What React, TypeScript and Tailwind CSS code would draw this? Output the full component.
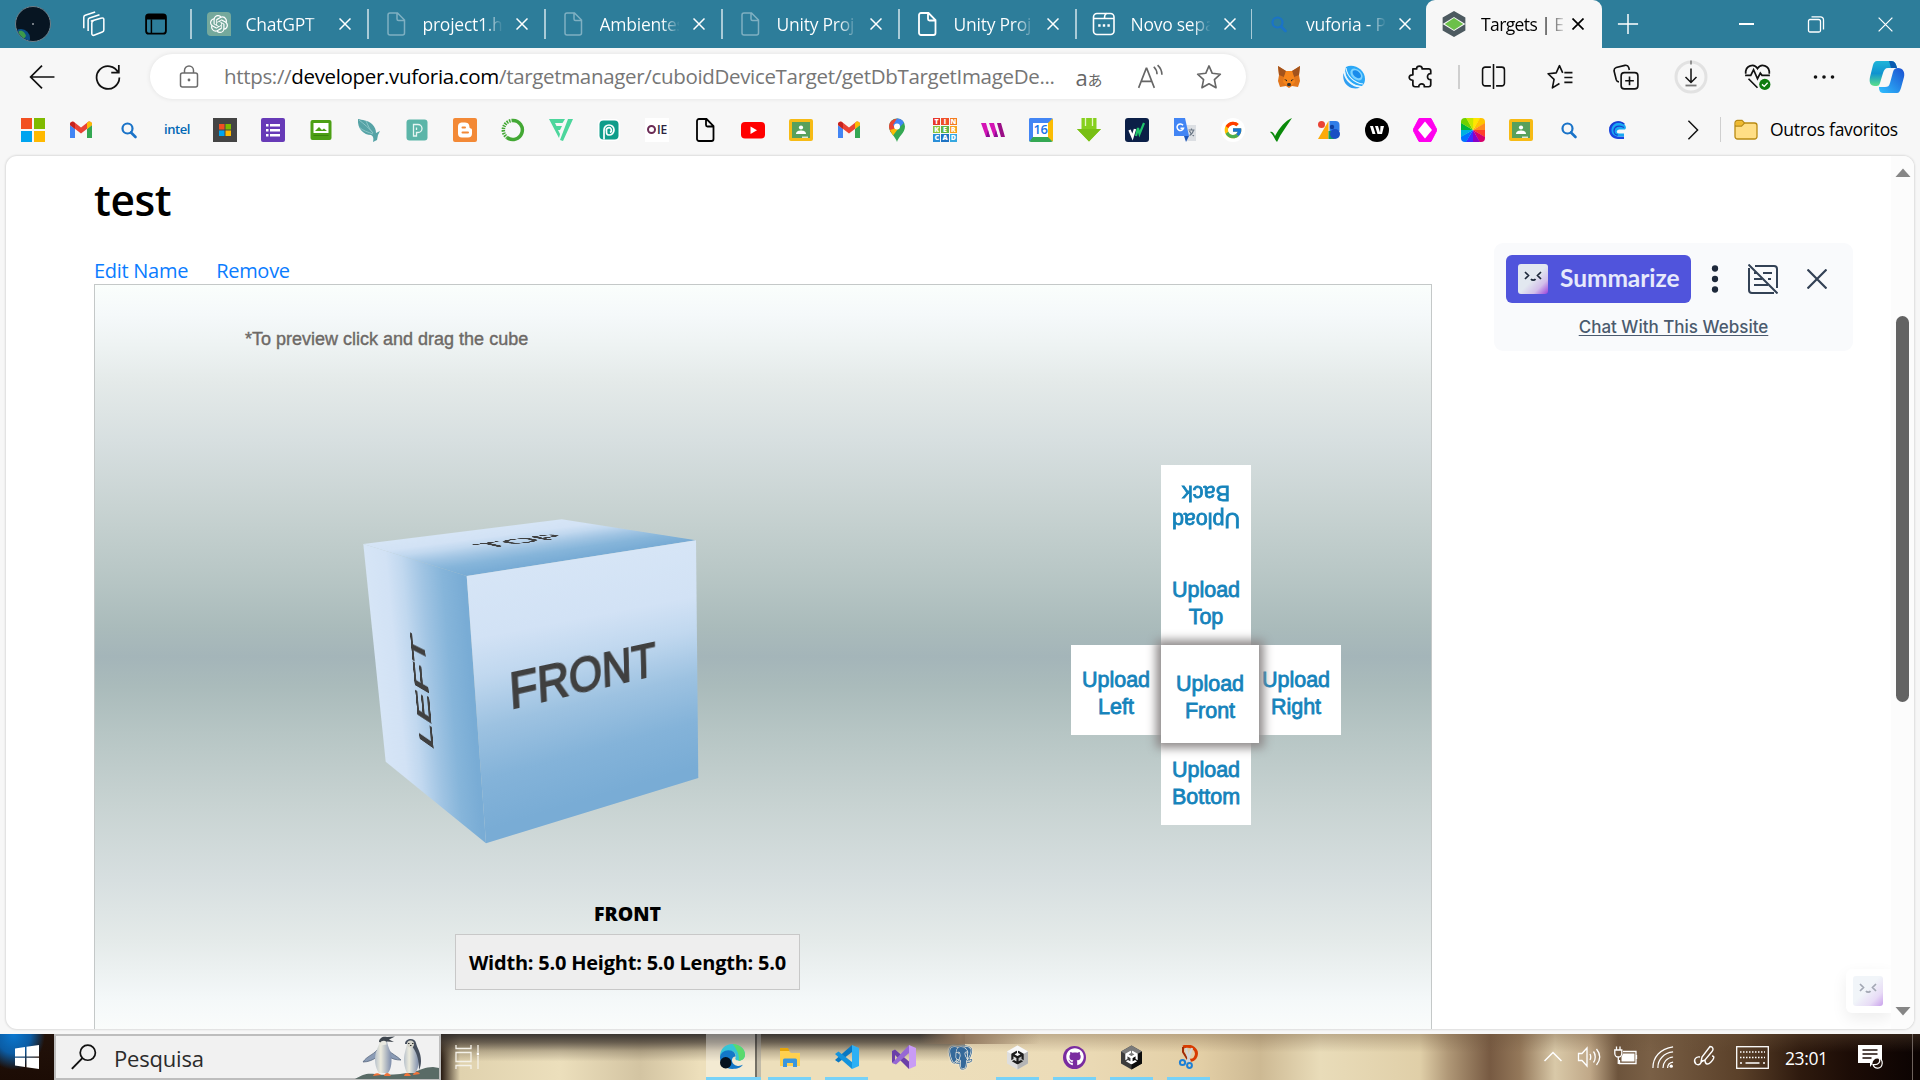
import React from "react";
import { FcGoogle } from "react-icons/fc";
import { SiOpenai, SiUnity } from "react-icons/si";
import { FaGithub } from "react-icons/fa";
import { BiLogoPostgresql } from "react-icons/bi";

type Kids = { children?: React.ReactNode };

/* ---------- shared icon helpers ---------- */

function Svg({ size = 24, box = 24, children, className = "" }: Kids & { size?: number; box?: number; className?: string }) {
  return (
    <svg width={size} height={size} viewBox={`0 0 ${box} ${box}`} fill="none" className={`block shrink-0 ${className}`}>
      {children}
    </svg>
  );
}

function Close({ size = 12, w = 1.5 }: { size?: number; w?: number }) {
  return (
    <Svg size={size} box={12}>
      <path d="M0.5 0.5 11.5 11.5M11.5 0.5 0.5 11.5" stroke="currentColor" strokeWidth={w} />
    </Svg>
  );
}

function PageIcon({ color, w = 1.5 }: { color: string; w?: number }) {
  return (
    <Svg>
      <path d="M4 3a2 2 0 0 1 2-2h7.500l7 7v13a2 2 0 0 1-2 2H6a2 2 0 0 1-2-2z M13 1v6a1.500 1.500 0 0 0 1.500 1.500h6" stroke={color} strokeWidth={w} />
    </Svg>
  );
}

function SearchBlue() {
  return (
    <Svg>
      <circle cx="10.500" cy="10.500" r="5" stroke="#1a73c8" strokeWidth="2.200" />
      <path d="M14 14.500 18.500 19" stroke="#1a73c8" strokeWidth="2.600" strokeLinecap="round" />
    </Svg>
  );
}

/* ---------- tab strip ---------- */

const tabs = [
  { title: "ChatGPT", icon: "gpt" },
  { title: "project1.h", icon: "pageDim" },
  { title: "Ambientes", icon: "pageDim" },
  { title: "Unity Proj", icon: "pageDim" },
  { title: "Unity Proj", icon: "page" },
  { title: "Novo sepa", icon: "new" },
  { title: "vuforia - P", icon: "search" },
];

function TabIcon({ kind }: { kind: string }) {
  if (kind === "gpt")
    return (
      <div className="flex h-6 w-6 items-center justify-center rounded-[4px] rounded-br-none bg-[#75a99c] text-white">
        <SiOpenai size={18} />
      </div>
    );
  if (kind === "pageDim") return <PageIcon color="#7fb0c2" />;
  if (kind === "page") return <PageIcon color="#ffffff" w={1.8} />;
  if (kind === "new")
    return (
      <Svg>
        <rect x="1.500" y="1.500" width="20.500" height="21" rx="3.500" stroke="#fff" strokeWidth="1.600" />
        <path d="M2 6.500h10.500q0-5 2.500-5M12.500 6.500H22" stroke="#fff" strokeWidth="1.600" />
        <path d="M6.200 13.500h2.400M10.800 13.500h2.400M15.400 13.500h2.400" stroke="#fff" strokeWidth="2.600" />
      </Svg>
    );
  return <SearchBlue />;
}

function TabStrip() {
  return (
    <div className="flex h-12 w-full bg-[#2d7d9a] text-white">
      <div className="flex w-[190px] shrink-0 items-center">
        <div className="ml-[15px] flex h-9 w-9 overflow-hidden rounded-full border border-[#70808a] bg-[#071522]">
          <Svg size={34} box={34}>
            <circle cx="5" cy="31" r="9" fill="#0c4f86" />
            <path d="M3 24c4-1 6 2 7 5l-3 4H0z" fill="#3d9a4a" />
            <circle cx="17" cy="17" r="0.800" fill="#fff" />
          </Svg>
        </div>
        <Svg size={26} className="ml-[29px]">
          <g stroke="#fff" strokeWidth="1.400" strokeLinejoin="round">
            <path d="M10.500 9.200 20 6.500a1.500 1.500 0 0 1 2 1.400v9.600a2 2 0 0 1-1.400 1.900l-7.700 3a1.500 1.500 0 0 1-2-1.400V11a2 2 0 0 1 1.300-1.800z" />
            <path d="M7.500 18.500V8.300a2 2 0 0 1 1.300-1.900L18 3.500" />
            <path d="M3.500 16V5.800a2 2 0 0 1 1.300-1.900L14 1" />
          </g>
        </Svg>
        <Svg size={22} className="ml-[39px]">
          <rect x="1.200" y="1.500" width="21.600" height="21" rx="3" stroke="#000" strokeWidth="2" />
          <path d="M1 7V4a3 3 0 0 1 3-3h16a3 3 0 0 1 3 3v3z" fill="#000" />
          <path d="M7 7v15.500" stroke="#000" strokeWidth="1.600" />
        </Svg>
      </div>
      {tabs.map((t, i) => (
        <div key={i} className={`flex shrink-0 items-center ${i < 5 ? "w-[177px]" : "w-[175.500px]"}`}>
          <div className="h-[30px] w-[1.500px] shrink-0 bg-[#a9cbd7]" />
          <div className="ml-[15px] w-6 shrink-0">
            <TabIcon kind={t.icon} />
          </div>
          <div className="ml-[15px] w-[79px] shrink-0 whitespace-nowrap bg-[linear-gradient(90deg,#fff_62px,transparent_80px)] bg-clip-text bg-no-repeat text-[17.500px] tracking-[-0.250px] text-transparent">
            {t.title}
          </div>
          <div className="ml-[14px]">
            <Close />
          </div>
        </div>
      ))}
      <div className="flex h-12 w-[176px] shrink-0 items-center rounded-t-[9px] bg-[#f7f7f7] text-black">
        <Svg size={26} className="ml-[15px]">
          <path d="M12 0 22.500 6v6L12 5.500 1.500 12V6z" fill="#4d5a60" />
          <path d="M1.500 12v6L12 24l10.500-6v-6L12 18.500z" fill="#4d5a60" />
          <path d="M12 6.500 20.500 12 12 17.500 3.500 12z" fill="#6cc04a" />
        </Svg>
        <div className="ml-[14px] w-[82px] whitespace-nowrap bg-[linear-gradient(90deg,#000_62px,transparent_86px)] bg-clip-text text-[17.500px] tracking-[-0.600px] text-transparent">
          Targets | E
        </div>
        <div className="ml-[9px]">
          <Close w={1.7} />
        </div>
      </div>
      <div className="flex items-center">
        <Svg size={22} className="ml-[15px]">
          <path d="M12 1v22M1 12h22" stroke="#fff" strokeWidth="1.600" />
        </Svg>
        <div className="ml-[100px] h-[1.500px] w-[15px] bg-white" />
        <Svg size={18} box={18} className="ml-[53px]">
          <path d="M2.500 4.500h9a2 2 0 0 1 2 2v9a1.500 1.500 0 0 1-1.500 1.500H3A1.500 1.500 0 0 1 1.500 15.500V6a1.500 1.500 0 0 1 1.500-1.500M4.500 1.800h9A3 3 0 0 1 16.500 5v9.500" stroke="#fff" strokeWidth="1.300" />
        </Svg>
        <div className="ml-[53px]">
          <Close size={15} w={1} />
        </div>
      </div>
    </div>
  );
}

/* ---------- address row ---------- */

function Slot({ w, children }: Kids & { w: string }) {
  return <div className={`flex shrink-0 items-center justify-center ${w}`}>{children}</div>;
}

function AddressRow() {
  return (
    <div className="flex h-[57px] w-full items-center text-black">
      <Slot w="w-[84px]">
        <Svg size={26}>
          <path d="M12 1.500 1.500 12 12 22.500M1.500 12H23.500" stroke="#111" strokeWidth="1.600" />
        </Svg>
      </Slot>
      <Slot w="w-[47px]">
        <Svg size={26}>
          <path d="M21.500 8A10.500 10.500 0 1 0 22.500 12.500M22 1v7h-7" stroke="#111" strokeWidth="1.600" />
        </Svg>
      </Slot>
      <div className="ml-[19px] flex h-[45px] w-[1096px] items-center rounded-full bg-white shadow-[0_0_5px_rgba(0,0,0,0.09)]">
        <Svg size={24} className="ml-[27px]">
          <rect x="3.500" y="8" width="17" height="14" rx="2" stroke="#6b6b6b" strokeWidth="1.500" />
          <path d="M7.500 8V5.500a4.500 4.500 0 0 1 9 0V8" stroke="#6b6b6b" strokeWidth="1.500" />
          <circle cx="12" cy="15" r="1.400" fill="#6b6b6b" />
        </Svg>
        <div className="ml-[23px] w-[842px] whitespace-nowrap text-[20.500px] tracking-[-0.330px] text-[#767676]">
          https://<span className="text-black">developer.vuforia.com</span>/targetmanager/cuboidDeviceTarget/getDbTargetImageDe...
        </div>
        <div className="w-[46px] whitespace-nowrap text-center leading-none text-[#666]">
          <span className="text-[22px]">a</span>
          <span className="font-['Noto_Sans_CJK_JP',sans-serif] text-[15px]">あ</span>
        </div>
        <div className="w-[68px] pl-[8px]">
          <Svg size={26} className="mx-auto">
            <path d="M1.500 22 8.500 4h.5L16 22M4 16h9.500M15.500 2.500c2 2 3 4 3 7M19 1c2.600 2.300 4 5.500 4 9" stroke="#666" strokeWidth="1.500" />
          </Svg>
        </div>
        <Slot w="w-[58px]">
          <Svg size={26}>
            <path d="m12 1.800 3 6.800 7.500.800-5.500 5 1.500 7.500-6.500-3.700-6.500 3.700L7 14.400l-5.500-5 7.500-.800z" stroke="#666" strokeWidth="1.500" strokeLinejoin="round" />
          </Svg>
        </Slot>
      </div>
      <Slot w="w-[86px]">
        <Svg>
          <path d="M1 1l8 5h6l8-5-1 9 1 6-2 6-6-1-3 2-3-2-6 1-2-6 1-6z" fill="#e2761b" />
          <path d="M1 1l8 5-2 6-5-2zM23 1l-8 5 2 6 5-2z" fill="#a3531c" />
          <path d="M9 6h6l2 6 1 5-3 3H9l-3-3 1-5z" fill="#f6851b" />
          <path d="M7 14l3 1v1.500zM17 14l-3 1v1.500z" fill="#222" />
          <path d="M10 19l1-1h2l1 1-.5 2h-3z" fill="#333" />
        </Svg>
      </Slot>
      <Slot w="w-[44px]">
        <Svg size={24}>
          <path d="M4 2C12-2 23 5 23 14c0 3-1 5-3 7C11 22 0 12 4 2z" fill="#2ba8f7" />
          <path d="M1.500 8C3 16 10 22 18 22.500c-3 1.500-8 1.500-12-1.500S.5 13 1.500 8z" fill="#2f9ff2" />
          <path d="M2.500 6C3 14 10 21.500 19.500 21.500M4 3c1 8 8 15 17 16" stroke="#e6f6ff" strokeWidth="1.100" />
          <ellipse cx="14.500" cy="9.500" rx="7" ry="4.800" transform="rotate(42 14.500 9.500)" fill="#7ed3ff" />
          <ellipse cx="14.800" cy="9.200" rx="5" ry="3" transform="rotate(42 14.800 9.200)" fill="#1a8ceb" />
        </Svg>
      </Slot>
      <Slot w="w-[90px]">
        <Svg size={26}>
          <path d="M4.500 4.500H8c-.5-3.500 5.500-3.500 5 0h6c1 0 2 1 2 2V9c-4-.5-4 6 0 5.500V19a2 2 0 0 1-2 2h-4c1-3.500-5.500-3.500-5 0H6.500a2 2 0 0 1-2-2v-4C0 15 0 9.500 4.500 10z" stroke="#111" strokeWidth="1.600" strokeLinejoin="round" />
        </Svg>
      </Slot>
      <div className="ml-[-8px] h-[24px] w-[1.500px] bg-[#cfcfcf]" />
      <Slot w="w-[67px]">
        <Svg size={25}>
          <path d="M9.500 3H4a2.500 2.500 0 0 0-2.500 2.500v13A2.500 2.500 0 0 0 4 21h5.500M14.500 3H20a2.500 2.500 0 0 1 2.500 2.500v13A2.500 2.500 0 0 1 20 21h-5.500M12 0v24" stroke="#111" strokeWidth="1.500" />
        </Svg>
      </Slot>
      <Slot w="w-[67px]">
        <Svg size={26}>
          <path d="M16 8h7.500M16 12.500h7.500M16 17h7.500M14.500 8.200 11.500 1.500 8.500 8.200l-7.500.800 5.500 5.200L5 22l6.500-4" stroke="#111" strokeWidth="1.500" strokeLinejoin="round" />
        </Svg>
      </Slot>
      <Slot w="w-[64px]">
        <Svg size={26}>
          <rect x="7.500" y="8" width="15.500" height="15" rx="3" stroke="#111" strokeWidth="1.500" />
          <path d="M15.250 11.500v8M11.250 15.500h8M5.500 16.500A3 3 0 0 1 3 14.500L1 6.500A3 3 0 0 1 3 3.300l8-2a3 3 0 0 1 3.500 2l.6 2.200" stroke="#111" strokeWidth="1.500" />
        </Svg>
      </Slot>
      <Slot w="w-[67px]">
        <Svg size={34} box={34}>
          <circle cx="17" cy="17" r="15" stroke="#e2e2e2" strokeWidth="3" />
          <path d="M17 0.500v4" stroke="#777" strokeWidth="1.500" />
          <path d="M17 8.500v13.500M11.500 17l5.500 5.500 5.500-5.500" stroke="#111" strokeWidth="1.500" />
          <path d="M11.500 25.500h11" stroke="#777" strokeWidth="1.800" />
        </Svg>
      </Slot>
      <Slot w="w-[66px]">
        <Svg size={27}>
          <path d="M1.500 9.500C1 2 9 0 12 5c3-5 11-3 10.500 4.500M1 11h5l2.500-5L12 14l2.500-5 1.500 2h7M4 14l8 8" stroke="#111" strokeWidth="1.500" />
          <circle cx="18.500" cy="19" r="5" fill="#107c10" />
          <path d="m16 19 2 1.800 3-3.300" stroke="#fff" strokeWidth="1.200" />
        </Svg>
      </Slot>
      <Slot w="w-[66px]">
        <Svg size={24}>
          <g fill="#111"><circle cx="3.500" cy="12" r="1.800" /><circle cx="12" cy="12" r="1.800" /><circle cx="20.500" cy="12" r="1.800" /></g>
        </Svg>
      </Slot>
      <Slot w="w-[60px]">
        <Svg size={36} box={36}>
          <defs>
            <linearGradient id="cpA" x1="0" y1="0" x2="0" y2="1"><stop offset="0" stopColor="#1fb5d8" /><stop offset=".5" stopColor="#0f93d0" /><stop offset="1" stopColor="#5be08a" /></linearGradient>
            <linearGradient id="cpB" x1="1" y1="0" x2="0" y2="1"><stop offset="0" stopColor="#1b4fd0" /><stop offset="1" stopColor="#2fc0ff" /></linearGradient>
          </defs>
          <path d="M8 2h14c4 0 5 3 6 7h-9c-3 0-4 2-5 5l-3 10c-1 3-2 3-5 3-5 0-6-4-5-9L4 6c.5-2 2-4 4-4z" fill="url(#cpA)" />
          <path d="M28 34H14c-3 0-4-3-4-6h6c3 0 4-1 5-4l3-11c1-3 2-4 5-4 5 0 7 4 6 9l-3 11c-1 3-2 5-4 5z" fill="url(#cpB)" />
          <path d="M22 2c4 0 5 3 6 7h-6l-2-7z" fill="#0a5bb0" />
        </Svg>
      </Slot>
    </div>
  );
}

/* ---------- favourites bar ---------- */

function Gmail() {
  return (
    <Svg>
      <path d="M1 20V7l5 4v9z" fill="#4285f4" />
      <path d="M18 20v-9l5-4v13z" fill="#34a853" />
      <path d="M1 7V6c0-2 2.500-3 4-2l7 5.500L19 4c1.500-1 4 0 4 2v1l-11 8.500z" fill="#ea4335" />
      <path d="M18 5v6l5-4V6c0-2-2.500-3-4-2z" fill="#fbbc04" />
      <path d="M1 7V6c0-1.500 1.500-2.500 3-2.300L6 5v6z" fill="#c5221f" />
    </Svg>
  );
}

function Classroom() {
  return (
    <Svg>
      <rect y="1" width="24" height="22" rx="2" fill="#f6bb16" />
      <rect x="3" y="4" width="18" height="16" fill="#57a05c" />
      <circle cx="12" cy="9.500" r="2.100" fill="#fff" />
      <path d="M7 16c0-3 3-3.500 5-3.500s5 .5 5 3.500z" fill="#fff" />
      <path d="M13 18.500h6V20h-6z" fill="#d8e7d9" />
    </Svg>
  );
}

const wheel = ["#ffe600", "#ffc400", "#ff8a1f", "#ff3f2a", "#d6006c", "#8b00c8", "#3e2bff", "#0072ff", "#00b1e0", "#00b53c", "#6fd000", "#c8e600"];

const favs: React.ReactNode[] = [
  <Svg><path d="M0 0h11v11H0z" fill="#f25022" /><path d="M13 0h11v11H13z" fill="#7fba00" /><path d="M0 13h11v11H0z" fill="#00a4ef" /><path d="M13 13h11v11H13z" fill="#ffb900" /></Svg>,
  <Gmail />,
  <SearchBlue />,
  <span className="text-[13px] font-semibold tracking-[-0.400px] text-[#0068b5]">intel</span>,
  <Svg><path d="M0 0h24v24H0z" fill="#444" /><path d="M6 6h5.500v5.500H6z" fill="#f25022" /><path d="M12.500 6H18v5.500h-5.500z" fill="#7fba00" /><path d="M6 12.500h5.500V18H6z" fill="#00a4ef" /><path d="M12.500 12.500H18V18h-5.500z" fill="#ffb900" /></Svg>,
  <Svg><rect width="24" height="24" rx="2" fill="#673ab7" /><path d="M5 6h2.500v2.500H5zM9 6h10v2.500H9zM5 11h2.500v2.500H5zM9 11h10v2.500H9zM5 16h2.500v2.500H5zM9 16h10v2.500H9z" fill="#fff" /></Svg>,
  <Svg><rect x="1.500" y="2" width="21" height="20" rx="2" fill="#4c9f14" /><path d="M4.500 5h15v10h-15z" fill="#fff" /><path d="m6 13 4-4 3 3 2-1.500 3 2.500z" fill="#4c9f14" /><path d="M4.500 17h15v1h-15z" fill="#3b830d" /></Svg>,
  <Svg><path d="M1 1c4 1 10 1 14 5 3 3 4 6 4 9l4-2-2 4-1 5-4 2c1-4 0-6-2-7C7 17 0 11 1 1z" fill="#56a3a6" /><path d="M2 2c5 4 10 8 14 13M9 3c2 4 3 8 7 12M2 9c4 4 9 5 14 7" stroke="#8cc5c6" strokeWidth="1" /></Svg>,
  <Svg><rect x="1.500" y="1.500" width="21" height="21" rx="3" fill="#5bb5a8" /><path d="M8.500 18V6.500H13a4 4 0 0 1 0 8h-1.500V18zM11.500 9.500v2.500" stroke="#e5f5f2" strokeWidth="1.300" /></Svg>,
  <Svg><rect width="24" height="24" rx="2" fill="#f38936" /><path d="M8.500 4.500H12c4 0 4.500 3 4.500 5 0 1 2.500.5 2.500 2.500v3.500a4 4 0 0 1-4 4H9a4 4 0 0 1-4-4V8.500a4 4 0 0 1 3.500-4z" fill="#fff" /><path d="M9.500 9.500H12M9.500 14.500H15" stroke="#f38936" strokeWidth="2" strokeLinecap="round" /></Svg>,
  <Svg><path d="M12 2.500a9.500 9.500 0 1 1-6 17" stroke="#43a834" strokeWidth="3.500" /><path d="M12 2.500a9.500 9.500 0 0 0-6 17" stroke="#43a834" strokeWidth="3.500" strokeDasharray="1.500 1" /></Svg>,
  <Svg><path d="M0 1h16l-2.500 4H6l1.500 3H13l-2 4H9l2 4-1 4zM19 1h5L14 23l-3-1z" fill="#4cd69c" /></Svg>,
  <Svg><rect x="1" y="1" width="22" height="22" rx="5" fill="#fff" /><rect x="2.500" y="2.500" width="19" height="19" rx="4" fill="#0f9d8a" /><path d="M7 21.500V12a5 5 0 1 1 5 5M12 17c-2.500 0-2.500-1.500-2.500-4a2.500 2.500 0 1 1 3.500 1.500" stroke="#fff" strokeWidth="1.700" /></Svg>,
  <div className="flex h-6 w-6 items-center justify-center bg-white text-[12px] font-semibold tracking-[-0.300px] text-[#2b2440]"><span className="mr-px h-[9px] w-[9px] rounded-full border-2 border-[#6b2b55]" />IE</div>,
  <PageIcon color="#000" w={1.8} />,
  <Svg><rect y="4" width="24" height="16.500" rx="4" fill="#f00" /><path d="m9.500 8.500 6.500 3.700-6.500 3.800z" fill="#fff" /></Svg>,
  <Classroom />,
  <Gmail />,
  <Svg><path d="M12 24c-1-5-8-9-8-15.500a8 8 0 0 1 16 0C20 15 13 19 12 24z" fill="#34a853" /><path d="M4 8.500a8 8 0 0 1 13-6L6 14.500C5 12.800 4 10.500 4 8.500z" fill="#ea4335" /><path d="m12 .500a8 8 0 0 1 7 4.200L12 12l-4-5z" fill="#4285f4" /><path d="m5 12 9.500-3L8 17.500z" fill="#fbbc04" /><circle cx="12" cy="8.500" r="3" fill="#fff" /></Svg>,
  <div className="grid h-6 w-6 grid-cols-3 grid-rows-3 gap-px text-center text-[7px] font-extrabold leading-[7px] text-white">
    <span className="bg-[#e8372b]">T</span><span className="bg-[#f0502a]">I</span><span className="bg-[#f47b20]">N</span>
    <span className="bg-[#8bc53f]">K</span><span className="bg-[#5fb445]">E</span><span className="bg-[#f9a11b]">R</span>
    <span className="bg-[#2a8fd8]">C</span><span className="bg-[#1f74c4]">A</span><span className="bg-[#36a8e0]">D</span>
  </div>,
  <Svg><path d="M0 5h5l4 14H5zM8 5h5l4 14h-4z" fill="#d414b4" /><path d="M16 5h4l4 14h-4z" fill="#9a0e86" /><path d="m7 12 2 7H5zM15 12l2 7h-4z" fill="#8c0d94" /></Svg>,
  <div className="flex h-6 w-6 flex-col rounded-[2px] border-b-[5px] border-l-[4px] border-r-[5px] border-t-[5px] border-b-[#34a853] border-l-[#4285f4] border-r-[#fbbc04] border-t-[#4285f4] bg-white text-center text-[13px] font-semibold leading-[13px] tracking-[-0.500px] text-[#1a73e8]">16</div>,
  <Svg><path d="M4.500 0h15v11H24L12 23.500 0 11h4.500z" fill="#86cf1e" /><path d="M8.500 0v8M15.500 0v8" stroke="#e6f7c6" strokeWidth="1.300" /><path d="M0 11h24L12 23.500z" fill="#78bf14" /></Svg>,
  <Svg><rect width="24" height="24" rx="3" fill="#0b1f47" /><path d="m4.500 12 3 7 2.500-8" stroke="#fff" strokeWidth="2.400" /><path d="m11 18 2-8 1.500 6 4.500-11" stroke="#20c46b" strokeWidth="2.200" /></Svg>,
  <Svg><path d="M10 7h13v16H14z" fill="#dcdfe3" /><path d="M1 0h11l4 18H1z" fill="#4285f4" /><path d="M11 18h5l-3 6z" fill="#1d56b8" /><path d="M10 7.200a3.300 3.300 0 1 0 .5 3H7.500" stroke="#fff" strokeWidth="1.500" /><path d="M15.500 12h6M18.500 10.500V12M16.500 17.500c2-1 3.500-3 4-5.500M16.500 13c1 2.500 2.500 4 4.500 5" stroke="#6b7785" strokeWidth="1.200" /></Svg>,
  <div className="flex h-6 w-6 items-center justify-center rounded-full bg-white"><FcGoogle size={20} /></div>,
  <Svg><path d="M1 14c2-1 4 1 5 4C11 9 16 3 23 0 18 8 12 15 8 24 6 22 4 16 1 14z" fill="#0a8a0a" /></Svg>,
  <Svg><circle cx="4.500" cy="6.500" r="3.500" fill="#ea4335" /><path d="M1 21 11.500 3v18z" fill="#fbaa0a" /><path d="M12.500 3h6a4 4 0 0 1 4 4v6h-10z" fill="#2f7de8" /><path d="M11.500 13h6v8h-6z" fill="#14a05c" /><circle cx="18" cy="16" r="5" fill="#1a4fc4" /><circle cx="15" cy="9" r="2.200" fill="#0f3f9e" /></Svg>,
  <Svg><circle cx="12" cy="12" r="12" fill="#000" /><path d="M5 8h3l2.500 8h-3zM10 8h3l2.500 8h-3zM15.500 8H19l-2 8h-2z" fill="#fff" /></Svg>,
  <Svg><path d="M6 .500h12L24 12l-6 11.500H6L0 12z" fill="#f0e" strokeLinejoin="round" stroke="#f0e" /><path d="M12 3.500 19 12l-7 8.500L5 12z" fill="#fff" /></Svg>,
  <Svg>
    <defs><clipPath id="wheelClip"><rect width="24" height="24" rx="4" /></clipPath></defs>
    <g clipPath="url(#wheelClip)">
      {wheel.map((c, i) => (
        <path key={c} d="M12 12 12 -8 23 -6z" fill={c} transform={`rotate(${i * 30} 12 12)`} />
      ))}
    </g>
  </Svg>,
  <Classroom />,
  <SearchBlue />,
  <Svg><path d="M20 6C15 1 4 3 4 12c0 5 4 9 9 9h6v-2.500h-5c-3 0-4.500-2-4.500-4" fill="#1b46e0" /><path d="M20 7C14 2 6 6 6.500 13c.5 4 4 5.500 7 5.500H19v-3h-5c-3 0-3-4 0-4h6c1.500-1 1-3 0-4.500z" fill="#19a8f2" /><path d="M19 9.500c-5-3-10-1-10 3.500 0 2.500 2 4 4 4M19 6c-5-4-12-2-14 4" stroke="#173fd0" strokeWidth="1.200" /></Svg>,
];

function FavouritesBar() {
  return (
    <div className="flex h-[51px] items-center pb-[2px] pl-[9px]">
      {favs.map((f, i) => (
        <div key={i} className="flex w-12 shrink-0 items-center justify-center">{f}</div>
      ))}
      <Svg size={22} className="ml-[41px]">
        <path d="m7 2 10 10L7 22" stroke="#111" strokeWidth="1.600" />
      </Svg>
      <div className="ml-[16px] h-[25px] w-px bg-[#cfcfcf]" />
      <Svg size={24} className="ml-[13px]">
        <path d="M1 5a2.500 2.500 0 0 1 2.500-2.500h4.500L10.500 5H20.500A2.500 2.500 0 0 1 23 7.500v11A2.500 2.500 0 0 1 20.500 21h-17A2.500 2.500 0 0 1 1 18.500z" fill="#ffde85" stroke="#b98a12" strokeWidth="1.300" />
        <path d="M1 8h6.500L10.500 5" stroke="#b98a12" strokeWidth="1.300" />
        <path d="M2 5c0-1 .7-1.700 1.700-1.700h4L9.500 5 7.500 7.300H2z" fill="#f0b92c" />
      </Svg>
      <div className="ml-[12px] whitespace-nowrap text-[17.500px] tracking-[-0.300px] text-black">Outros favoritos</div>
    </div>
  );
}

/* ---------- cuboid preview ---------- */

type Pt = [number, number];
const SIDE = 250;

/** Projective transform that maps a SIDE×SIDE box onto a quad (tl, tr, br, bl). */
function project([p0, p1, p2, p3]: [Pt, Pt, Pt, Pt]) {
  const [dx1, dy1] = [p1[0] - p2[0], p1[1] - p2[1]];
  const [dx2, dy2] = [p3[0] - p2[0], p3[1] - p2[1]];
  const [dx3, dy3] = [p0[0] - p1[0] + p2[0] - p3[0], p0[1] - p1[1] + p2[1] - p3[1]];
  const den = dx1 * dy2 - dx2 * dy1;
  const g = (dx3 * dy2 - dx2 * dy3) / den;
  const h = (dx1 * dy3 - dx3 * dy1) / den;
  const a = (p1[0] - p0[0] + g * p1[0]) / SIDE;
  const b = (p3[0] - p0[0] + h * p3[0]) / SIDE;
  const d = (p1[1] - p0[1] + g * p1[1]) / SIDE;
  const e = (p3[1] - p0[1] + h * p3[1]) / SIDE;
  return `matrix3d(${a},${d},0,${g / SIDE},${b},${e},0,${h / SIDE},0,0,1,0,${p0[0]},${p0[1]},0,1)`;
}

const A: Pt = [23.3, 25];
const B: Pt = [221.7, 0.3];
const C: Pt = [356, 21.3];
const D: Pt = [126.7, 57];
const E: Pt = [358.3, 259];
const F: Pt = [146, 324.3];
const G: Pt = [45.7, 242.7];

const sideShade = "bg-[linear-gradient(180deg,#d6e5f6_0%,#d2e2f5_25%,#c1d8ef_42%,#a0c4e3_62%,#86b5da_80%,#79acd5_97%)]";
const frontShade = "bg-[linear-gradient(180deg,#d6e5f6_0%,#d2e2f5_22%,#c1d8ef_36%,#9dc2e1_55%,#84b3d9_75%,#79acd5_95%)]";

const faces: { label: string; quad: [Pt, Pt, Pt, Pt]; shade: string; nudge: string }[] = [
  { label: "TOP", quad: [A, B, C, D], shade: sideShade, nudge: "translate-x-[4px] translate-y-[-10px]" },
  { label: "LEFT", quad: [G, A, D, F], shade: sideShade, nudge: "translate-x-[-9px] translate-y-[3px]" },
  { label: "FRONT", quad: [D, C, E, F], shade: frontShade, nudge: "translate-x-[-9px] translate-y-[-14px]" },
];

function Cube() {
  return (
    <div className="relative h-[330px] w-[370px]">
      {faces.map((f) => (
        <div
          key={f.label}
          className={`absolute left-0 top-0 flex h-[250px] w-[250px] origin-top-left items-center justify-center font-['Liberation_Sans',Arial,sans-serif] text-[47.500px] text-[#404040] [-webkit-text-stroke:1.800px_#404040] ${f.shade}`}
          style={{ transform: project(f.quad) }}
        >
          <span className={f.nudge}>{f.label}</span>
        </div>
      ))}
    </div>
  );
}

function NetTile({ label, className = "" }: { label: string; className?: string }) {
  return (
    <div className={`flex flex-col items-center justify-center bg-white pt-[8px] text-center font-['Liberation_Sans',Arial,sans-serif] text-[21.500px] leading-[27px] text-[#1583bb] [-webkit-text-stroke:0.800px_#1583bb] ${className}`}>
      <span>Upload</span>
      <span>{label}</span>
    </div>
  );
}

function CubeNet() {
  return (
    <div className="grid grid-cols-[90px_90px_90px] grid-rows-[90px_90px_90px_90px]">
      <NetTile label="Back" className="col-start-2 row-start-1 rotate-180" />
      <NetTile label="Top" className="col-start-2 row-start-2" />
      <NetTile label="Left" className="col-start-1 row-start-3" />
      <NetTile label="Right" className="col-start-3 row-start-3" />
      <NetTile label="Bottom" className="col-start-2 row-start-4" />
      <NetTile label="Front" className="relative z-10 col-start-2 row-start-3 h-[98px] w-[98px] shadow-[0_0_9px_5px_#8f8b8b]" />
    </div>
  );
}

function Panel() {
  return (
    <div className="flex h-[745px] w-[1338px] border border-b-0 border-[#c4c8c8] bg-[linear-gradient(180deg,#fafefc_0%,#f5f9fa_4%,#eef3f3_8%,#e4eae9_13%,#d7dfe0_21%,#c8d3d2_30%,#b6c5c4_40%,#aabbbb_46%,#a4b5b9_50%,#aabbbb_54%,#b6c5c4_60%,#c8d3d2_70%,#d7dfe0_80%,#e4eae9_88%,#f4f8f9_96%,#fafcfb_100%)]">
      <div className="flex w-[976px] flex-col">
        <div className="ml-[150px] mt-[42px] h-[24px] whitespace-nowrap font-['Liberation_Sans',Arial,sans-serif] text-[18px] leading-[24px] text-[#6d6966] [-webkit-text-stroke:0.400px_#6d6966]">
          *To preview click and drag the cube
        </div>
        <div className="ml-[245px] mt-[168px]">
          <Cube />
        </div>
        <div className="ml-[360px] mt-[51px] flex w-[345px] flex-col items-center">
          <div className="h-[27px] text-[19.500px] font-extrabold leading-[27px] text-black">FRONT</div>
          <div className="mt-[7px] flex h-[56px] w-[345px] items-center justify-center whitespace-nowrap border border-[#c8c8c8] bg-[#eee] pt-[2px] text-[20px] font-bold tracking-[-0.220px] text-black">
            Width: 5.0 Height: 5.0 Length: 5.0
          </div>
        </div>
      </div>
      <div className="mt-[180px]">
        <CubeNet />
      </div>
    </div>
  );
}

/* ---------- assistant widget ---------- */

function Face({ faded = false }: { faded?: boolean }) {
  const c = faded ? "#a3a8b4" : "#1e293b";
  return (
    <div className={`h-[30px] w-[30px] rounded-[3px] ${faded ? "bg-[linear-gradient(135deg,#f1f5f9_45%,#e8dcf6_75%,#c9a0ec_100%)]" : "bg-[linear-gradient(135deg,#e2e8f0_50%,#d3bfea_75%,#9a40da_100%)]"}`}>
      <Svg size={30} box={30}>
        <path d="m7 8 3.500 3.500L7 15M23 8l-3.500 3.500L23 15M13 15c1 1.500 3.500 1.500 4.500 0" stroke={c} strokeWidth="1.700" />
      </Svg>
    </div>
  );
}

function Summary() {
  return (
    <div className="h-[108px] w-[359px] rounded-[9px] bg-[#f9fafc] pl-[12px] pt-[12px] font-['Inter',sans-serif]">
      <div className="flex h-12 items-center">
        <div className="flex h-12 w-[185px] items-center rounded-[6px] bg-[#5054dc] pl-[12px]">
          <Face />
          <span className="ml-[12px] pb-[2px] font-['Lato',sans-serif] text-[24.500px] font-bold leading-none tracking-[-0.050px] text-[#e6e9fb]">Summarize</span>
        </div>
        <Svg size={28} className="ml-[10px]">
          <g fill="#1e293b"><circle cx="12" cy="3" r="2.700" /><circle cx="12" cy="12" r="2.700" /><circle cx="12" cy="21" r="2.700" /></g>
        </Svg>
        <Svg size={30} box={30} className="ml-[19px]">
          <path d="M1 4v22a3 3 0 0 0 3 3h22M7 2h19a3 3 0 0 1 3 3v19M0.500 0.500l29 29M6 9h2.500M15 9h9M6 15h8M20 15h3M6 21h14" stroke="#334155" strokeWidth="2" />
        </Svg>
        <Svg size={20} box={20} className="ml-[29px]">
          <path d="m0.500 0.500 19 19M19.500 0.500l-19 19" stroke="#334155" strokeWidth="2.200" />
        </Svg>
      </div>
      <div className="mt-[12px] w-[335px] whitespace-nowrap text-center text-[17px] font-medium leading-[24px] text-[#4b5a6e] underline underline-offset-2">
        Chat With This Website
      </div>
    </div>
  );
}

/* ---------- page ---------- */

function WebPage() {
  return (
    <div className="ml-[6px] flex h-[873px] w-[1908px] shrink-0 overflow-hidden rounded-[11px] bg-white shadow-[0_0_2px_1px_rgba(0,0,0,0.11)]">
      <div className="ml-[88px] w-[1338px]">
        <h1 className="mt-[14px] h-[60px] text-[42.500px] font-semibold leading-[60px] tracking-[-0.400px] text-black">test</h1>
        <div className="mt-[27px] flex h-[27px] gap-[28px] text-[20px] leading-[27px] text-[#0a7cff]">
          <span className="tracking-[-0.280px]">Edit Name</span>
          <span className="tracking-[-0.280px]">Remove</span>
        </div>
        <Panel />
      </div>
      <div className="flex flex-1 flex-col justify-between">
        <div className="ml-[62px] mt-[87px]"><Summary /></div>
        <div className="mb-[16px] self-end rounded-l-[6px] bg-white py-[7px] pl-[7px] pr-[8px] shadow-[0_6px_16px_rgba(0,0,0,0.07)]"><Face faded /></div>
      </div>
      <div className="flex w-[23px] flex-col items-center bg-[#fcfcfc]">
        <Svg size={16} box={16} className="mt-[9px]"><path d="M8 3.500 15.500 12H.5z" fill="#868686" /></Svg>
        <div className="mt-[135px] h-[386px] w-[13px] rounded-full bg-[#636363]" />
        <Svg size={16} box={16} className="mb-[10px] mt-auto"><path d="M8 12.500 15.500 4H.5z" fill="#868686" /></Svg>
      </div>
    </div>
  );
}

/* ---------- taskbar ---------- */

function UnityCube({ a, b, c, glyph }: { a: string; b: string; c: string; glyph: string }) {
  return (
    <Svg size={27} box={27}>
      <path d="M13.500 1.500 24 7.500v12l-10.500 6L3 19.500v-12z" fill={b} />
      <path d="M13.500 1.500 24 7.500l-10.500 6L3 7.500z" fill={a} />
      <path d="M24 7.500v12l-10.500 6v-12z" fill={c} />
      <g transform="translate(6.500 6.500)">
        <SiUnity size={14} color={glyph} />
      </g>
    </Svg>
  );
}

const apps: { icon: React.ReactNode; open: boolean }[] = [
  { open: true, icon: <Svg><path d="M2 6h9l2 2h9v13H2z" fill="#ffd04f" /><path d="M2 3h8l1.500 3H2z" fill="#e5a50a" /><path d="M5 22v-7a1.500 1.500 0 0 1 1.500-1.500h11A1.500 1.500 0 0 1 19 15v7h-4v-4H9v4z" fill="#3a96dd" /></Svg> },
  { open: true, icon: <Svg><path d="M17 0 24 3v18l-7 3z" fill="#2eb0f5" /><path d="M17 0v7L3.500 17.500 0 15z" fill="#0a78c2" /><path d="M17 24v-7L3.500 6.500 0 9z" fill="#1493dc" /></Svg> },
  { open: false, icon: <Svg><path d="M17 0 24 3v18l-7 3z" fill="#c99bf5" /><path d="M0 6l3-1.500 14 12V24L3 10v6l-3 2z" fill="#6b3fa8" /><path d="M17 0v8L4 19.500 0 18l3-3z" fill="#9768d4" /></Svg> },
  { open: false, icon: <BiLogoPostgresql size={29} color="#35699a" className="[filter:drop-shadow(0_0_1px_white)]" /> },
  { open: true, icon: <UnityCube a="#f8f8f8" b="#dedede" c="#b5b5b5" glyph="#1c1c1c" /> },
  { open: true, icon: <div className="flex h-[23px] w-[23px] items-center justify-center rounded-full bg-[#7a2ca0]"><FaGithub size={18} color="#fff" /></div> },
  { open: true, icon: <UnityCube a="#7a7a7a" b="#3c3c3c" c="#0c0c0c" glyph="#ffffff" /> },
  { open: true, icon: <Svg><path d="M6 2c9-3 15 3 13 9-1 3-4 5-7 4" stroke="#d83b01" strokeWidth="3" /><path d="M6 2v5l5 8" stroke="#a12c06" strokeWidth="2" /><path d="M9 3c1 4 1 8 4 14M15 3l-5 14" stroke="#d2d5d8" strokeWidth="2.200" /><circle cx="5.500" cy="17.500" r="2.600" stroke="#1c7fd6" strokeWidth="2" /><circle cx="12.500" cy="20.500" r="2.400" stroke="#1c7fd6" strokeWidth="2" /></Svg> },
];

function Penguins() {
  return (
    <svg width="84" height="44" viewBox="0 0 84 44" fill="none" className="block">
      <defs>
        <linearGradient id="belly" x1="0" x2="1"><stop offset="0" stopColor="#b9c2cc" /><stop offset=".35" stopColor="#ecebdd" /><stop offset="1" stopColor="#7c8cab" /></linearGradient>
      </defs>
      <path d="M0 44c8-5 12-6 20-5 14 2 26 0 38-2 8-2 12-5 20-5l6 1v11z" fill="#596b66" />
      <path d="M18 41c1-3 5-4 8-1zM29 41c1-4 5-4 7 0zM49 41c1-4 5-4 7 0zM58 40c1-4 5-4 7-1z" fill="#f0743a" />
      <path d="M22 15c-4 5-10 6-14 12 5 0 10-2 14-5zM33 15c4 4 9 6 13 10-5 0-9-1-13-4z" fill="#8a9bb5" stroke="#5b6a80" strokeWidth=".8" />
      <path d="M25 5h7c0 4 2 8 3.500 12 2 8 1 17-2.500 21h-9c-4-5-5-14-3-21 1-4 4-8 4-12z" fill="url(#belly)" />
      <path d="M24 7c0-4 4-6 8-5l8-.500-6 3 5 2.500-7-.500c-2 1-6 1-8 .5z" fill="#3f464e" />
      <path d="M26 6.500c2-1 4-1 5 0l.5 3-6 1z" fill="#e8e8e0" />
      <path d="M52 9h7c3 4 5 9 5 15 0 7-2 12-4 14h-8c-3-6-4-14-2-21z" fill="url(#belly)" />
      <path d="M50 9c0-6 10-7 11-1 1 5 5 9 5 18 0 4-1 7-2 9 0-10-2-16-5-21-2-2-1-5-4-5z" fill="#47505f" />
      <circle cx="55.500" cy="9" r="3.500" fill="#d6d5cb" />
      <path d="M53 8.500h1.500M57 8.500h1.500M55 10.500h1.500" stroke="#333" strokeWidth="1" />
    </svg>
  );
}

function Taskbar() {
  return (
    <div className="mt-auto flex h-[46px] w-full shrink-0 overflow-hidden text-white [background:linear-gradient(90deg,transparent_920px,#8f755c_960px,transparent_1040px)_0_0/1920px_10px_no-repeat,linear-gradient(180deg,rgba(48,44,42,.92)_0%,rgba(70,62,54,.75)_18%,rgba(90,78,62,.35)_36%,transparent_60%)_0_0/965px_100%_no-repeat,linear-gradient(180deg,rgba(110,85,60,.35)_0%,transparent_40%),linear-gradient(90deg,#1c0f08_0px,#1c0f08_440px,#e0d2ae_460px,#ecdfbc_560px,#d3c4a2_640px,#eddfbb_700px,#eddfbb_900px,#ecdcb8_1060px,#e3cfa6_1200px,#cdb993_1260px,#e9dcb9_1320px,#e0cfa8_1420px,#b09877_1448px,#775a42_1490px,#94785a_1520px,#d9c9a8_1555px,#c0a888_1590px,#6d543c_1618px,#7a6046_1650px,#5a4029_1740px,#2e1a0e_1800px,#1c0c06_1850px,#0b0302_1920px)]">
      <div className="flex w-[54px] shrink-0 items-center justify-center bg-[radial-gradient(ellipse_at_25%_0%,#0a78d0_0%,#0b5ca4_30%,transparent_55%),linear-gradient(#22120a,#1c0c05)]">
        <Svg size={24}><path d="M0 3.500 10 2v9.500H0zM11.500 1.700 24 0v11.500H11.500zM0 12.700h10V22L0 20.500zM11.500 12.700H24V24l-12.500-1.800z" fill="#fff" /></Svg>
      </div>
      <div className="flex w-[387px] shrink-0 items-center border-2 border-[#bdbdbd] bg-[#f1f1f1]">
        <Svg size={26} className="ml-[15px]"><circle cx="15.500" cy="8" r="7" stroke="#111" strokeWidth="1.600" /><path d="M10.500 13 .8 23" stroke="#111" strokeWidth="1.800" /></Svg>
        <div className="ml-[17px] flex-1 pt-[3px] text-[22px] tracking-[-0.200px] text-[#2b2b2b]">Pesquisa</div>
        <Penguins />
      </div>
      <div className="flex w-[265px] shrink-0 items-center">
        <Svg size={24} className="ml-[14px]"><path d="M1 0v3.500h15V0M1 24v-3.500h15V24M1 7.500h15v9H1zM23 0v7M23 10.500V24" stroke="#f4f1e8" strokeWidth="1.300" /><path d="M21.800 7.500h2.400v2.500h-2.400z" fill="#fff" /></Svg>
      </div>
      <div className="flex w-[55px] shrink-0 flex-col border-b-[3px] border-[#77d2f8] bg-white/35">
        <div className="flex flex-1 items-center justify-between">
          <Svg size={25} className="ml-[14px] mt-[2px]">
            <path d="M0 12C0 5 5 0 12 0s12 5 12 10c0 4-3 6-6 6-2 0-4-1-3-3 1-3-1-6-5-6C5 7 1 10 0 12z" fill="#35c4d6" />
            <path d="M12 0c7 0 12 5 12 10 0 4-3 6-6 6 1-7-3-12-6-16z" fill="#5bd96c" />
            <path d="M0 13c0-4 4-7 8-7 5 0 7 3 7 6-5 0-5 8 2 9 2 .2 4-.5 5-1-2 3-6 4-10 4C5 24 0 19 0 13z" fill="#1378c8" />
            <circle cx="5.500" cy="18" r="5.500" fill="#06121e" />
          </Svg>
          <div className="h-[43px] w-[6px] border-l-2 border-black/40 bg-black/20" />
        </div>
      </div>
      <div className="flex">
        {apps.map((a, i) => (
          <div key={i} className="flex w-[57px] shrink-0 flex-col items-center">
            <div className="flex flex-1 items-center pt-[3px]">{a.icon}</div>
            <div className={`h-[3px] w-[43px] ${a.open ? "bg-[#77d2f8]" : ""}`} />
          </div>
        ))}
      </div>
      <div className="ml-auto flex items-center">
        <Slot w="w-[36px]"><Svg size={18} box={18}><path d="m0.500 13 8.500-8.500 8.500 8.500" stroke="#fff" strokeWidth="1.500" /></Svg></Slot>
        <Slot w="w-[36px]"><Svg><path d="M1.500 8.500H5l5-5.500v18l-5-5.500H1.500z" stroke="#fff" strokeWidth="1.300" /><path d="M13 9c1 2 1 4 0 6M16.500 6.500c2.300 3 2.300 8 0 11M19.500 4c4 5 4 11 0 16" stroke="#fff" strokeWidth="1.300" /></Svg></Slot>
        <Slot w="w-[37px]"><Svg><path d="M9 6.500h13v12H5.500V15" stroke="#fff" strokeWidth="1.300" /><path d="M9 8.500h11.500v8H7.500V12z" fill="#fff" /><path d="M22.500 10v4M.8 5h7v3.500a3.500 3.500 0 0 1-7 0zM2.500 1.500V5M6 1.500V5M4.300 12v7" stroke="#fff" strokeWidth="1.300" /></Svg></Slot>
        <Slot w="w-[37px]"><Svg size={22}><path d="M1 24C1 12 9 3 23 1M6.500 24C6 15 13 7.500 23 6.500M12 24c0-6 4-11.500 11-12M17 24c0-3 2-6 6-6.500" stroke="#fff" strokeWidth="1.300" /><circle cx="21" cy="22" r="1.800" fill="#fff" /></Svg></Slot>
        <Slot w="w-[46px]"><Svg><path d="M18 1.500c3 0 4 3 2 5L13 15l-4 2 1-5zM8 12c-5-1-7 4-4 7 3 2 6-1 6-4M13 15c0 5 3 5 6 2s4-6 1-6" stroke="#fff" strokeWidth="1.400" /></Svg></Slot>
        <Slot w="w-[50px]"><svg width="33" height="23" viewBox="0 0 33 23" fill="none"><rect x=".7" y=".7" width="31.600" height="21.600" stroke="#fff" strokeWidth="1.300" /><path d="M4 6h25M4 11.500h25" stroke="#fff" strokeWidth="1.400" strokeDasharray="1.500 1.500" /><path d="M4 17h2M9.500 17h14M27 17h2" stroke="#fff" strokeWidth="1.400" /></svg></Slot>
        <div className="ml-[8px] w-[45px] whitespace-nowrap pt-[2px] text-[17.500px] tracking-[-0.400px]">23:01</div>
        <Svg size={26} box={26} className="ml-[28px]"><path d="M0 1h24v18h-9l-3 4v-4H0z" fill="#fff" /><path d="M4.500 6h15M4.500 10h15M4.500 14h9" stroke="#1c0d07" strokeWidth="1.400" /><circle cx="19.500" cy="19.500" r="5" fill="#1c0d07" /><path d="M20.500 13.500c3 4 0 8-5.500 7 1.500 5 8.500 5 9.200-1 .3-3-1.700-5-3.700-6z" stroke="#fff" strokeWidth="1.200" fill="#1c0d07" /></Svg>
        <div className="ml-[28px] mr-[7px] h-[46px] w-px bg-[#6d625d]" />
      </div>
    </div>
  );
}

export default function App() {
  return (
    <div className="flex h-[1080px] w-[1920px] flex-col overflow-hidden bg-[#f7f7f7] font-['Open_Sans',sans-serif]">
      <TabStrip />
      <AddressRow />
      <FavouritesBar />
      <WebPage />
      <Taskbar />
    </div>
  );
}
